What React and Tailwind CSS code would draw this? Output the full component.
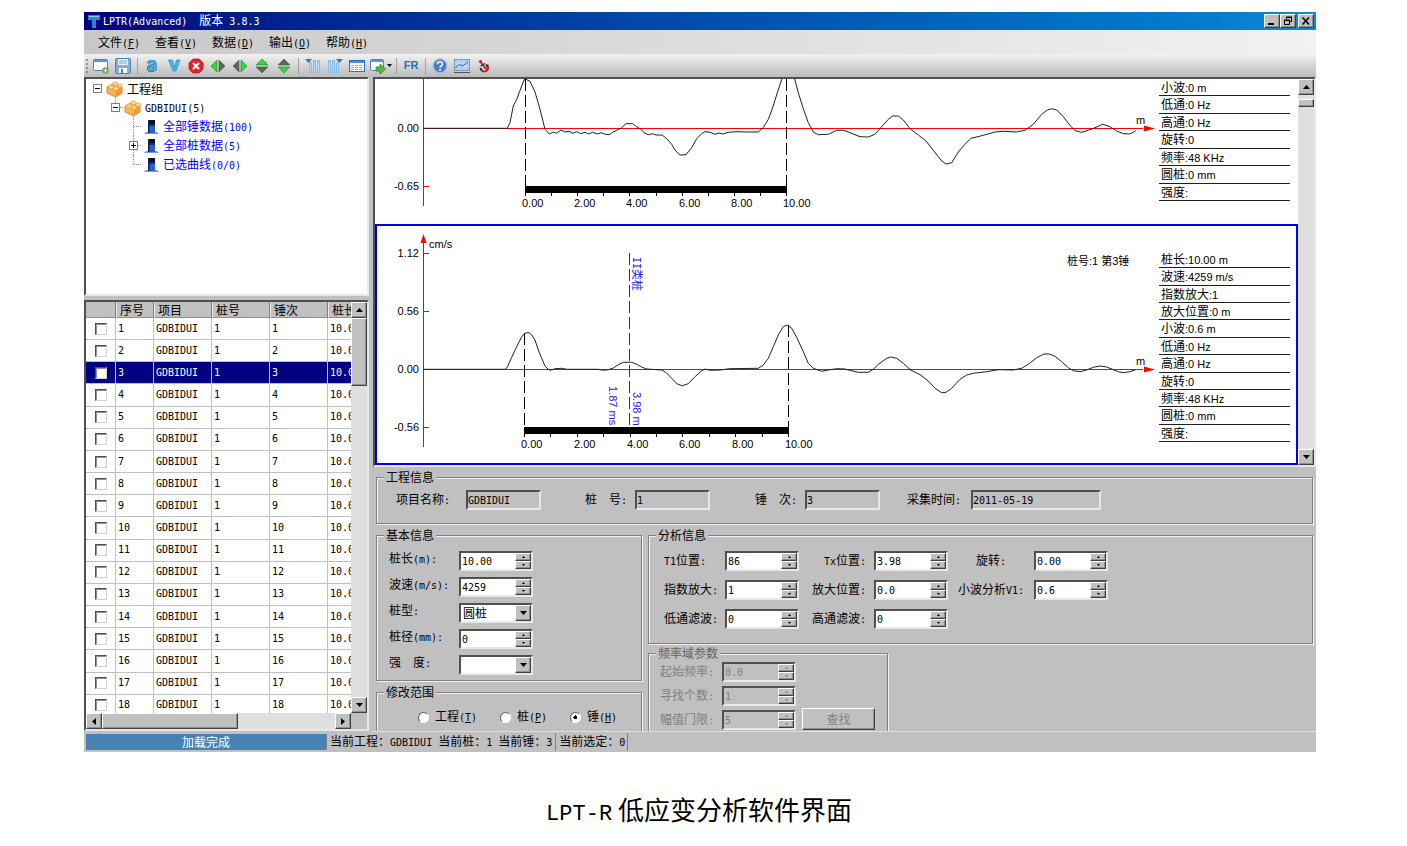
import { useId } from "react";

const raised =
  "border border-t-white border-l-white border-r-[#404040] border-b-[#404040] bg-[#c0c0c0] shadow-[inset_-1px_-1px_0_#909090]";
const sunken =
  "border-2 border-t-[#505050] border-l-[#505050] border-r-[#e8e8e8] border-b-[#e8e8e8]";

// Latin runs are set in a smaller face so that they take half the width of a Chinese character
function Mix({ text, sans }) {
  const parts = text.split(/([\x20-\x7e]+)/).filter(Boolean);
  return (
    <span className="whitespace-pre">
      {parts.map((part, i) =>
        /^[\x20-\x7e]/.test(part) ? (
          <span
            key={i}
            className={
              sans
                ? "font-['Liberation_Sans',sans-serif] text-[11px]"
                : "font-['DejaVu_Sans_Mono',monospace] text-[10px]"
            }
          >
            {part}
          </span>
        ) : (
          part
        )
      )}
    </span>
  );
}

function Arrow({ dir }) {
  const d = {
    up: "M0 4h7L3.5 0z",
    down: "M0 0h7L3.5 4z",
    left: "M4 0v7L0 3.5z",
    right: "M0 0v7L4 3.5z",
  };
  const flat = dir === "up" || dir === "down";
  return (
    <svg width={flat ? 7 : 4} height={flat ? 4 : 7} aria-hidden="true">
      <path d={d[dir]} />
    </svg>
  );
}

function ScrollButton({ dir }) {
  return (
    <button
      type="button"
      aria-label={`Scroll ${dir}`}
      className={`flex h-4 w-4 shrink-0 items-center justify-center ${raised}`}
    >
      <Arrow dir={dir} />
    </button>
  );
}

/* ---------- title, menu, toolbar ---------- */

function TitleBar() {
  return (
    <header className="flex h-[18px] items-center bg-linear-to-r from-[#000080] to-[#1088d6] pr-[2px] pl-1 text-white">
      <svg width="12" height="14" className="mr-[3px]" aria-hidden="true">
        <path d="M0 1h12v5H8v8H4V6H0z" fill="#2a86c4" />
        <path d="M1 2h10v1H1z" fill="#8fd0f0" />
      </svg>
      <h1 className="flex-1 text-[12px] leading-[16px]">
        <Mix text="LPTR(Advanced)  版本 3.8.3" />
      </h1>
      <button type="button" aria-label="Minimize" className={`flex h-[14px] w-[16px] items-center justify-center ${raised}`}>
        <svg width="10" height="10" aria-hidden="true">
          <path d="M1 7h6v2H1z" />
        </svg>
      </button>
      <button type="button" aria-label="Restore" className={`mr-[2px] flex h-[14px] w-[16px] items-center justify-center ${raised}`}>
        <svg width="10" height="10" fill="none" stroke="#000" aria-hidden="true">
          <path d="M3.5 3V1.5h5v4H7M3 1h6" />
          <path d="M1.5 4.5h5v4h-5zM1 4h6" />
        </svg>
      </button>
      <button type="button" aria-label="Close" className={`flex h-[14px] w-[16px] items-center justify-center ${raised}`}>
        <svg width="10" height="10" fill="none" stroke="#000" strokeWidth="1.6" aria-hidden="true">
          <path d="M1.5 1.5l6.5 7M8 1.5l-6.5 7" />
        </svg>
      </button>
    </header>
  );
}

const menus = [
  ["文件", "F"],
  ["查看", "V"],
  ["数据", "D"],
  ["输出", "O"],
  ["帮助", "H"],
];

function Hot({ text, letter }) {
  return (
    <span>
      {text}
      <span className="font-['DejaVu_Sans_Mono',monospace] text-[10px]">
        (<u>{letter}</u>)
      </span>
    </span>
  );
}

function MenuBar() {
  return (
    <nav className="flex h-6 items-center bg-linear-to-r from-[#c8c8c8] to-[#f2f2f2] pl-[14px] text-[12px]">
      {menus.map(([text, letter]) => (
        <button key={letter} type="button" className="w-[57px] text-left">
          <Hot text={text} letter={letter} />
        </button>
      ))}
    </nav>
  );
}

function Icon({ children }) {
  return (
    <svg width="16" height="16" viewBox="0 0 16 16" fill="none" aria-hidden="true">
      {children}
    </svg>
  );
}

function Tool({ label, children, className = "w-[22px]" }) {
  return (
    <button type="button" aria-label={label} className={`flex h-5 shrink-0 items-center justify-center ${className}`}>
      {children}
    </button>
  );
}

function Sep() {
  return <div className="mx-[3px] h-4 w-px shrink-0 bg-[#a0a0a0]" />;
}

function SideArrows({ left, right }) {
  return (
    <Icon>
      <path d="M1 8l6-6v12z" fill={left} stroke="#3a6a3a" strokeWidth=".6" />
      <path d="M15 8L9 2v12z" fill={right} stroke="#3a6a3a" strokeWidth=".6" />
    </Icon>
  );
}

function StackArrows({ top, bottom }) {
  return (
    <Icon>
      <path d="M8 1l6 6H2z" fill={top} stroke="#3a6a3a" strokeWidth=".6" />
      <path d="M8 15l6-6H2z" fill={bottom} stroke="#3a6a3a" strokeWidth=".6" />
    </Icon>
  );
}

const GREEN = "#2ee02e";
const GRAY = "#5c645c";

function Toolbar() {
  return (
    <div className="flex h-[23px] items-center bg-linear-to-b from-[#f2f2f2] to-[#bcbcbc] text-[12px]">
      <svg width="6" height="16" className="shrink-0" aria-hidden="true">
        <path d="M3 1v14" stroke="#909090" strokeWidth="2" strokeDasharray="2 2" />
      </svg>
      <Tool label="新建">
        <Icon>
          <rect x=".5" y="1.5" width="14" height="11" rx="1" fill="#fff" stroke="#4f7fb8" />
          <path d="M1 3h13" stroke="#5b9ae0" strokeWidth="2" />
          <circle cx="12.5" cy="12.5" r="3.2" fill="#5aa83c" />
          <path d="M12.5 10.5v4M10.5 12.5h4" stroke="#fff" strokeWidth="1.2" />
        </Icon>
      </Tool>
      <Tool label="保存">
        <Icon>
          <rect x=".5" y=".5" width="15" height="15" rx="1" fill="#7fb0e4" stroke="#4a80c0" />
          <path d="M3 1h10v6H3z" fill="#e8f2fc" />
          <path d="M4 3h8M4 5h8" stroke="#7ea6cc" />
          <path d="M4 10h8v5H4z" fill="#fff" />
          <path d="M6 11h2v4H6z" fill="#4a80c0" />
        </Icon>
      </Tool>
      <Sep />
      <Tool label="加速度">
        <Icon>
          <path d="M4.5 5.5C5 3 11 2.500 11 6v6.500M11 8C8 7.500 4.500 8 4.500 10.500c0 2.800 5 2.800 6.500-.5" stroke="#1b78b4" strokeWidth="3.2" />
          <path d="M4.5 5.5C5 3 11 2.500 11 6v6.500M11 8C8 7.500 4.500 8 4.500 10.500c0 2.800 5 2.800 6.500-.5" stroke="#58b8ea" strokeWidth="1.4" />
        </Icon>
      </Tool>
      <Tool label="速度">
        <Icon>
          <path d="M2.500 2h4L8.500 9l2-7h3.500L10 13H7z" fill="#4fb0e6" stroke="#3a94cc" strokeWidth=".8" />
        </Icon>
      </Tool>
      <Tool label="删除">
        <Icon>
          <path d="M5 1h6l4 4v6l-4 4H5l-4-4V5z" fill="#e8202a" stroke="#c01018" strokeWidth=".8" />
          <path d="M5 5l6 6M11 5l-6 6" stroke="#fff" strokeWidth="2.200" />
        </Icon>
      </Tool>
      <Tool label="左移">
        <SideArrows left={GREEN} right={GRAY} />
      </Tool>
      <Tool label="右移">
        <SideArrows left={GRAY} right={GREEN} />
      </Tool>
      <Tool label="上移">
        <StackArrows top={GREEN} bottom={GRAY} />
      </Tool>
      <Tool label="下移">
        <StackArrows top={GRAY} bottom={GREEN} />
      </Tool>
      <Sep />
      <Tool label="左列">
        <Icon>
          <path d="M5.500 4v11M9.500 2v13M13.500 2v13" stroke="#8cc0ec" strokeWidth="3" />
          <path d="M5.500 5v9M9.500 4v10M13.500 4v10" stroke="#b4d8f6" />
          <path d="M0 1h7L3.500 5z" fill="#3b78b4" />
        </Icon>
      </Tool>
      <Tool label="右列">
        <Icon>
          <path d="M2.500 2v13M6.500 2v13M10.500 4v11" stroke="#8cc0ec" strokeWidth="3" />
          <path d="M2.500 4v10M6.500 4v10M10.500 5v9" stroke="#b4d8f6" />
          <path d="M9 1h7l-3.500 4z" fill="#3b78b4" />
        </Icon>
      </Tool>
      <Tool label="表格">
        <Icon>
          <rect x=".5" y="2.500" width="15" height="11" fill="#fff" stroke="#2f6fc0" />
          <path d="M1 4h14" stroke="#4a90e0" strokeWidth="2" />
          <path d="M2 7.500h12M2 9.500h12M2 11.500h12" stroke="#8ab0d8" strokeDasharray="3 1" />
        </Icon>
      </Tool>
      <Tool label="导出" className="w-[25px] gap-px">
        <Icon>
          <rect x=".5" y="1.500" width="13" height="11" rx="1" fill="#fff" stroke="#4f7fb8" />
          <path d="M1 3h12" stroke="#5b9ae0" strokeWidth="2" />
          <path d="M6 9h4V6l5.500 5-5.500 5v-3H6z" fill="#5ab83c" stroke="#2f7a20" strokeWidth=".8" />
        </Icon>
        <svg width="5" height="3" aria-hidden="true">
          <path d="M0 0h5L2.500 3z" />
        </svg>
      </Tool>
      <Sep />
      <Tool label="FR">
        <span className="font-['Liberation_Sans',sans-serif] text-[11px] font-bold text-[#1874c4]">FR</span>
      </Tool>
      <Sep />
      <Tool label="帮助">
        <Icon>
          <circle cx="8" cy="8" r="7" fill="#4a7ccc" stroke="#a8c0e4" strokeWidth="1.500" />
          <path d="M5.500 6.200C5.500 3 10.500 3 10.500 6c0 1.800-2.500 1.800-2.500 3.800" stroke="#fff" strokeWidth="1.600" />
          <path d="M7.200 11h1.700v1.700H7.200z" fill="#fff" />
        </Icon>
      </Tool>
      <Tool label="曲线">
        <Icon>
          <rect x=".5" y="1.500" width="15" height="11" fill="#a8cdf0" stroke="#8a96a4" />
          <path d="M1 5h14M1 8h14M5 2v10M10 2v10" stroke="#d4e6f8" strokeWidth=".7" />
          <path d="M1.500 9.500l4-3 3 1.500 5.500-4" stroke="#2f6098" />
          <path d="M0 14.500h16" stroke="#505860" />
        </Icon>
      </Tool>
      <Tool label="锚点">
        <Icon>
          <path d="M5 4.500l5.500 7" stroke="#c01828" strokeWidth="1.800" />
          <circle cx="4.500" cy="3.500" r="1.500" fill="#c01828" />
          <path d="M4.500 8l4.500-2.500" stroke="#303030" strokeWidth="1.400" />
          <path d="M5 11.500c2 3 5 2.500 6.500.5 1-1.500 1-3-.5-4.500" stroke="#c01828" strokeWidth="1.800" />
          <path d="M3.500 9.500l3 1-2 2.500zM9.500 6l3.500 1-2.500 2.500z" fill="#303030" />
        </Icon>
      </Tool>
    </div>
  );
}

/* ---------- project tree ---------- */

function Branch({ box, up, down, line }) {
  return (
    <svg width="18" height="19" className="shrink-0" aria-hidden="true">
      <g stroke="#909090" strokeDasharray="1 1">
        {up && <path d="M9.500 0v9" />}
        {down && <path d="M9.500 10v9" />}
        {line && <path d="M10 9.500h8" />}
      </g>
      {box && <rect x="5.500" y="5.500" width="8" height="8" fill="#fff" stroke="#808080" />}
      {box && <path d={box === "plus" ? "M7 9.500h5M9.500 7v5" : "M7 9.500h5"} stroke="#000" />}
    </svg>
  );
}

function BrickIcon() {
  return (
    <svg width="18" height="18" viewBox="0 0 18 18" className="shrink-0" aria-hidden="true">
      <path d="M1 7l6-3 9 2.500v6.500l-6.500 4L1 13z" fill="#f8b458" stroke="#e08c28" />
      <path d="M9.500 10.500l6.500-4v6.500l-6.500 4z" fill="#f09a38" />
      <ellipse cx="5" cy="7" rx="2.600" ry="2" fill="#fdd898" stroke="#e89c40" strokeWidth=".8" />
      <ellipse cx="9.500" cy="3.800" rx="2.600" ry="2" fill="#fdd898" stroke="#e89c40" strokeWidth=".8" />
      <ellipse cx="10" cy="8.500" rx="2.600" ry="2" fill="#fdd898" stroke="#e89c40" strokeWidth=".8" />
      <ellipse cx="14" cy="5.800" rx="2.300" ry="1.800" fill="#fdd898" stroke="#e89c40" strokeWidth=".8" />
    </svg>
  );
}

function PileIcon() {
  return (
    <svg width="18" height="18" viewBox="0 0 18 18" className="shrink-0" aria-hidden="true">
      <path d="M4 14h11l2 2H2z" fill="#7f97e0" />
      <path d="M6 2h7v13H6z" fill="#2a62c8" />
      <path d="M6 2h7v4H6z" fill="#0a1020" />
      <path d="M6 6h7v2H6z" fill="#16306c" />
      <path d="M6 2h1.500v13H6z" fill="#10245c" />
    </svg>
  );
}

function Tree() {
  return (
    <div className={`h-[219px] bg-white text-[12px] leading-[19px] ${sunken}`}>
      <ul>
        <li>
          <div className="flex h-[19px] items-center pl-[2px]">
            <Branch box="minus" />
            <BrickIcon />
            <span className="pl-[3px]">工程组</span>
          </div>
          <ul>
            <li>
              <div className="flex h-[19px] items-center pl-5">
                <Branch box="minus" up line />
                <BrickIcon />
                <span className="pl-[3px]">
                  <Mix text="GDBIDUI(5)" />
                </span>
              </div>
              <ul className="text-[#0000ff]">
                <li className="flex h-[19px] items-center pl-[38px]">
                  <Branch up down line />
                  <PileIcon />
                  <span className="pl-[3px]">
                    <Mix text="全部锤数据(100)" />
                  </span>
                </li>
                <li className="flex h-[19px] items-center pl-[38px]">
                  <Branch box="plus" up down line />
                  <PileIcon />
                  <span className="pl-[3px]">
                    <Mix text="全部桩数据(5)" />
                  </span>
                </li>
                <li className="flex h-[19px] items-center pl-[38px]">
                  <Branch up line />
                  <PileIcon />
                  <span className="pl-[3px]">
                    <Mix text="已选曲线(0/0)" />
                  </span>
                </li>
              </ul>
            </li>
          </ul>
        </li>
      </ul>
    </div>
  );
}

/* ---------- record table ---------- */

const rows = Array.from({ length: 18 }, (_, i) => i + 1);
const headers = ["序号", "项目", "桩号", "锤次", "桩长"];

function RecordTable() {
  const cell = "overflow-hidden border-r border-b border-[#c0c0c0] p-0 pl-[2px]";
  return (
    <div className={`flex h-[431px] flex-col bg-[#c0c0c0] ${sunken}`}>
      <div className="flex min-h-0 flex-1">
        <div className="min-w-0 flex-1 overflow-hidden bg-white">
          <table className="h-[415px] w-[300px] table-fixed border-separate border-spacing-0">
            <colgroup>
              <col className="w-[30px]" />
              <col className="w-[38px]" />
              <col className="w-[58px]" />
              <col className="w-[58px]" />
              <col className="w-[58px]" />
              <col className="w-[58px]" />
            </colgroup>
            <thead className="bg-[#c0c0c0] text-[12px] leading-[15px]">
              <tr className="h-4">
                <th className="border-r border-b border-r-[#808080] border-b-[#909090] p-0" />
                {headers.map((h) => (
                  <th
                    key={h}
                    className="border-r border-b border-l border-r-[#808080] border-b-[#909090] border-l-[#e8e8e8] p-0 pl-[3px] text-left font-normal"
                  >
                    {h}
                  </th>
                ))}
              </tr>
            </thead>
            <tbody className="font-['DejaVu_Sans_Mono',monospace] text-[10px] leading-[14px]">
              {rows.map((n) => (
                <tr key={n} className={n === 3 ? "bg-[#000080] text-white" : ""}>
                  <td className="border-r border-b border-[#c0c0c0] p-0 pl-[9px]">
                    <input
                      type="checkbox"
                      aria-label={`选择 ${n}`}
                      className="block h-[12px] w-[12px] appearance-none border border-t-[#505050] border-r-[#d0d0d0] border-b-[#d0d0d0] border-l-[#505050] bg-white shadow-[inset_1px_1px_0_#909090]"
                    />
                  </td>
                  <td className={cell}>{n}</td>
                  <td className={cell}>GDBIDUI</td>
                  <td className={cell}>1</td>
                  <td className={cell}>{n}</td>
                  <td className={cell}>10.00</td>
                </tr>
              ))}
            </tbody>
          </table>
        </div>
        <div className="flex w-4 flex-col bg-[#dfdfdf]">
          <ScrollButton dir="up" />
          <div className={`h-[68px] ${raised}`} />
          <div className="flex-1" />
          <ScrollButton dir="down" />
        </div>
      </div>
      <div className="flex h-4 shrink-0 pr-4">
        <ScrollButton dir="left" />
        <div className={`w-[136px] ${raised}`} />
        <div className="flex-1 bg-[#dfdfdf]" />
        <ScrollButton dir="right" />
      </div>
    </div>
  );
}

/* ---------- curves ---------- */

// samples are x,y pairs on a grid of three units to the pixel
const curveA =
  "160,157 412,157 420,140 430,90 440,70 462,12 466,9 480,16 495,48 510,100 525,160 538,174 550,168 560,172 573,162 585,168 597,166 608,172 620,167 632,173 645,169 656,174 668,169 682,174 694,170 706,175 718,176 728,169 740,163 755,155 768,143 788,143 800,152 812,159 822,170 835,176 848,173 858,177 876,177 890,188 905,205 915,222 930,237 948,236 965,215 980,188 995,173 1005,167 1020,169 1035,175 1047,171 1058,174 1075,169 1100,167 1130,168 1165,168 1180,155 1195,130 1208,95 1222,50 1237,5 1255,-20 1273,5 1285,50 1300,98 1315,140 1330,168 1345,176 1375,175 1400,163 1420,163 1435,168 1470,182 1495,183 1515,175 1535,152 1555,130 1568,120 1585,120 1600,132 1620,158 1645,177 1668,195 1690,223 1715,255 1728,264 1745,260 1765,228 1785,205 1803,187 1840,178 1875,168 1900,166 1940,168 1965,163 1990,145 2015,115 2032,102 2045,98 2060,102 2080,122 2100,148 2115,164 2135,169 2155,163 2175,155 2198,145 2220,152 2240,165 2260,173 2278,174 2290,169 2297,164";
const curveB =
  "160,448 405,448 412,442 425,412 440,380 455,350 466,339 478,338 485,345 495,360 505,390 515,415 525,438 537,450 545,450 555,446 575,445 590,448 685,448 700,451 715,449 730,444 745,434 760,427 785,427 800,433 815,441 830,447 875,450 890,459 905,475 922,492 937,497 955,491 975,470 995,452 1005,447 1020,451 1050,450 1080,446 1165,445 1180,435 1195,415 1210,380 1225,345 1240,320 1252,315 1265,325 1280,352 1300,395 1315,430 1330,445 1355,454 1380,449 1400,446 1425,447 1435,450 1465,457 1495,457 1510,448 1525,433 1550,415 1562,411 1580,415 1600,430 1622,450 1650,464 1675,483 1695,505 1715,518 1728,517 1745,505 1770,478 1790,465 1810,460 1850,455 1885,449 1930,450 1955,445 1975,433 2000,413 2022,402 2038,402 2055,409 2075,425 2095,443 2110,452 2130,455 2150,450 2170,442 2190,438 2210,441 2230,449 2245,455 2260,458 2280,455 2297,449";

function toPoints(samples, dx, dy) {
  return samples
    .split(" ")
    .map((pair) => {
      const [x, y] = pair.split(",").map(Number);
      return `${(x / 3 - dx).toFixed(1)},${(y / 3 - dy).toFixed(1)}`;
    })
    .join(" ");
}

function Plot({ zero, top, bottom, ticks, points, pile, peaks, barY, children }) {
  const step = (pile[1] - pile[0]) / 10;
  return (
    <svg
      className="h-full min-w-0 flex-1 font-['Liberation_Sans','Noto_Sans_CJK_SC',sans-serif] text-[11px]"
      role="img"
      aria-label="测试曲线"
    >
      <path d={`M46.500 ${top}V${bottom}M46 ${zero}H766`} stroke="#f00" fill="none" />
      <path d={`M778 ${zero}l-11 -3v6z`} fill="#f00" />
      {ticks.map(([y, label]) => (
        <g key={label}>
          <path d={`M46 ${y}h6`} stroke="#f00" />
          <text x="42" y={y + 3} textAnchor="end">
            {label}
          </text>
        </g>
      ))}
      <text x="759" y={zero - 5}>
        m
      </text>
      <polyline points={points} fill="none" stroke="#202020" />
      {pile.map((x, i) => (
        <path key={x} d={`M${x} ${peaks[i]}V${barY}`} stroke="#000" strokeDasharray="12 4" />
      ))}
      <rect x={pile[0]} y={barY} width={pile[1] - pile[0]} height="7" />
      {Array.from({ length: 11 }, (_, i) => (
        <path key={i} d={`M${Math.floor(pile[0] + step * i) + 0.5} ${barY}v10`} stroke="#000" />
      ))}
      {[0, 2, 4, 6, 8, 10].map((n) => (
        <text key={n} x={Math.floor(pile[0] + step * n) - 3} y={barY + 21}>
          {n.toFixed(2)}
        </text>
      ))}
      {children}
    </svg>
  );
}

function Params({ items, className }) {
  return (
    <ul className={`mr-[6px] grid w-[131px] shrink-0 auto-rows-fr text-[12px] leading-[16px] ${className}`}>
      {items.map((t) => (
        <li key={t} className="overflow-hidden border-b border-[#202020] pl-[2px]">
          <Mix text={t} sans />
        </li>
      ))}
    </ul>
  );
}

function Charts() {
  return (
    <div className={`flex h-[390px] bg-white ${sunken}`}>
      <div className="min-w-0 flex-1">
        <div className="flex h-[145px] border-x-2 border-transparent">
          <Plot
            zero={49.5}
            top={0}
            bottom={127}
            ticks={[
              [49.5, "0.00"],
              [107.5, "-0.65"],
            ]}
            points={toPoints(curveA, 7, 3)}
            pile={[148.5, 409.5]}
            peaks={[0, 0]}
            barY={107}
          />
          <Params
            className="h-[122px]"
            items={["小波:0 m", "低通:0 Hz", "高通:0 Hz", "旋转:0", "频率:48 KHz", "圆桩:0 mm", "强度:"]}
          />
        </div>
        <div className="flex h-[241px] border-2 border-[#0000e8]">
          <Plot
            zero={143.5}
            top={10}
            bottom={221}
            ticks={[
              [27.5, "1.12"],
              [85.5, "0.56"],
              [143.5, "0.00"],
              [201.5, "-0.56"],
            ]}
            points={toPoints(curveB, 7, 6)}
            pile={[147.5, 411.5]}
            peaks={[107, 99]}
            barY={201}
          >
            <path d="M46.500 8l3 9h-6z" fill="#f00" />
            <text x="52" y="22">
              cm/s
            </text>
            <text x="690" y="39">
              桩号:1 第3锤
            </text>
            <path d="M252.500 27V201" stroke="#2020f0" strokeDasharray="12 4" />
            <g fill="#2020f0">
              <text transform="translate(256 31) rotate(90)">
                <tspan className="font-['DejaVu_Sans_Mono',monospace] text-[10px]">II</tspan>类桩
              </text>
              <text transform="translate(256 166) rotate(90)">3.98 m</text>
              <text transform="translate(232 160) rotate(90)">1.87 ms</text>
            </g>
          </Plot>
          <Params
            className="mt-[25px] h-[191px]"
            items={[
              "桩长:10.00 m",
              "波速:4259 m/s",
              "指数放大:1",
              "放大位置:0 m",
              "小波:0.6 m",
              "低通:0 Hz",
              "高通:0 Hz",
              "旋转:0",
              "频率:48 KHz",
              "圆桩:0 mm",
              "强度:",
            ]}
          />
        </div>
      </div>
      <div className="flex w-4 flex-col bg-[#dfdfdf]">
        <ScrollButton dir="up" />
        <div className="h-1" />
        <div className={`h-2 ${raised}`} />
        <div className="flex-1" />
        <ScrollButton dir="down" />
      </div>
    </div>
  );
}

/* ---------- forms ---------- */

function Group({ title, children, className = "", disabled }) {
  return (
    <fieldset
      disabled={disabled}
      className={`min-w-0 shrink-0 border border-[#808080] shadow-[inset_1px_1px_0_#f0f0f0,1px_1px_0_#f0f0f0] ${className}`}
    >
      <legend className={`ml-[7px] bg-[#c0c0c0] px-[2px] text-[12px] leading-[14px] ${disabled ? "text-[#606060]" : ""}`}>
        {title}
      </legend>
      {children}
    </fieldset>
  );
}

function Label({ id, text, className = "" }) {
  return (
    <label htmlFor={id} className={`text-[12px] leading-[14px] ${className}`}>
      <Mix text={text} />
    </label>
  );
}

function ReadField({ label, value, className, labelClass = "w-[50px]", inputClass = "w-[75px]" }) {
  const id = useId();
  return (
    <div className={`flex items-center ${className}`}>
      <Label id={id} text={label} className={labelClass} />
      <input
        id={id}
        readOnly
        defaultValue={value}
        className={`h-5 bg-[#c0c0c0] font-['DejaVu_Sans_Mono',monospace] text-[10px] ${sunken} ${inputClass}`}
      />
    </div>
  );
}

function Spin({ id, value, disabled }) {
  const step = `flex h-2 w-4 items-center justify-center ${raised}`;
  return (
    <div className={`flex h-5 w-[74px] ${sunken} ${disabled ? "bg-[#c0c0c0]" : "bg-white"}`}>
      <input
        id={id}
        defaultValue={value}
        className="min-w-0 flex-1 pl-px font-['DejaVu_Sans_Mono',monospace] text-[10px] disabled:text-[#808080]"
      />
      <div className="flex flex-col">
        <button type="button" aria-label="增加" className={step}>
          <svg width="3" height="2" fill={disabled ? "#808080" : "#000"} aria-hidden="true">
            <path d="M0 2h3L1.500 0z" />
          </svg>
        </button>
        <button type="button" aria-label="减少" className={step}>
          <svg width="3" height="2" fill={disabled ? "#808080" : "#000"} aria-hidden="true">
            <path d="M0 0h3L1.500 2z" />
          </svg>
        </button>
      </div>
    </div>
  );
}

function Select({ id, options }) {
  return (
    <div className={`relative h-5 w-[74px] bg-white ${sunken}`}>
      <select id={id} className="block h-4 w-full appearance-none pl-[2px] text-[12px] leading-[16px]">
        {options.map((o) => (
          <option key={o}>{o}</option>
        ))}
      </select>
      <span className={`pointer-events-none absolute top-0 right-0 flex h-4 w-4 items-center justify-center ${raised}`}>
        <Arrow dir="down" />
      </span>
    </div>
  );
}

function BasicField({ label, value, options }) {
  const id = useId();
  return (
    <div className="flex h-5 items-start">
      <Label id={id} text={label} className="w-[70px]" />
      {options ? <Select id={id} options={options} /> : <Spin id={id} value={value} />}
    </div>
  );
}

function SpinField({ label, value, labelClass, disabled }) {
  const id = useId();
  return (
    <div className="flex items-center">
      <Label id={id} text={label} className={labelClass} />
      <Spin id={id} value={value} disabled={disabled} />
    </div>
  );
}

function Radio({ text, letter, checked }) {
  return (
    <label className="flex items-center gap-[6px]">
      <input
        type="radio"
        name="scope"
        defaultChecked={checked}
        className="h-[11px] w-[11px] appearance-none rounded-full border border-t-[#606060] border-r-white border-b-white border-l-[#606060] bg-white checked:bg-[radial-gradient(circle,#000_2px,#fff_2px)]"
      />
      <Hot text={text} letter={letter} />
    </label>
  );
}

function Forms() {
  return (
    <div className="flex h-[265px] flex-col overflow-hidden border-b border-[#e0e0e0] pt-[3px] pr-[3px] pl-[3px]">
      <Group title="工程信息" className="h-[54px]">
        <div className="flex pt-[6px]">
          <ReadField label="项目名称:" value="GDBIDUI" className="ml-[19px]" labelClass="w-[70px]" />
          <ReadField label="桩  号:" value="1" className="ml-11" />
          <ReadField label="锤  次:" value="3" className="ml-[45px]" />
          <ReadField
            label="采集时间:"
            value="2011-05-19"
            className="ml-[27px]"
            labelClass="w-[64px]"
            inputClass="w-[130px]"
          />
        </div>
      </Group>
      <div className="mt-1 flex gap-[6px]">
        <div className="w-[266px] shrink-0">
          <Group title="基本信息" className="h-[153px]">
            <div className="flex flex-col gap-[6px] pt-[9px] pl-3">
              <BasicField label="桩长(m):" value="10.00" />
              <BasicField label="波速(m/s):" value="4259" />
              <BasicField label="桩型:" options={["圆桩", "方桩"]} />
              <BasicField label="桩径(mm):" value="0" />
              <BasicField label="强  度:" options={["", "C20", "C30"]} />
            </div>
          </Group>
          <Group title="修改范围" className="mt-1 h-16">
            <div className="flex justify-between pt-[9px] pr-6 pl-[41px] text-[12px] leading-[16px]">
              <Radio text="工程" letter="T" />
              <Radio text="桩" letter="P" />
              <Radio text="锤" letter="H" checked />
            </div>
          </Group>
        </div>
        <div className="min-w-0 flex-1">
          <Group title="分析信息" className="h-[116px]">
            <div className="flex pt-[9px] pl-[15px]">
              <div className="flex flex-col gap-[9px]">
                <SpinField label="T1位置:" value="86" labelClass="w-[61px]" />
                <SpinField label="指数放大:" value="1" labelClass="w-[61px]" />
                <SpinField label="低通滤波:" value="0" labelClass="w-[61px]" />
              </div>
              <div className="flex flex-col gap-[9px]">
                <SpinField label="Tx位置:" value="3.98" labelClass="w-[75px] pr-2 text-right" />
                <SpinField label="放大位置:" value="0.0" labelClass="w-[75px] pr-2 text-right" />
                <SpinField label="高通滤波:" value="0" labelClass="w-[75px] pr-2 text-right" />
              </div>
              <div className="flex flex-col gap-[9px]">
                <SpinField label="旋转:" value="0.00" labelClass="w-[86px] text-center" />
                <SpinField label="小波分析V1:" value="0.6" labelClass="w-[86px] text-center" />
              </div>
            </div>
          </Group>
          <Group title="频率域参数" disabled className="mt-[2px] h-[100px] w-[240px]">
            <div className="flex items-end gap-[6px] pt-[2px] pl-[11px] text-[#808080]">
              <div className="flex flex-col gap-1">
                <SpinField label="起始频率:" value="0.0" labelClass="w-[62px]" disabled />
                <SpinField label="寻找个数:" value="1" labelClass="w-[62px]" disabled />
                <SpinField label="幅值门限:" value="5" labelClass="w-[62px]" disabled />
              </div>
              <button type="button" disabled className={`h-[22px] w-[73px] text-[12px] leading-[18px] ${raised}`}>
                查找
              </button>
            </div>
          </Group>
        </div>
      </div>
    </div>
  );
}

function StatusBar() {
  return (
    <footer className="flex h-5 items-center gap-[3px] pl-[2px] text-[12px] leading-[16px]">
      <div className="h-4 w-[241px] border-r border-[#808080] bg-[#4682b4] text-center text-white">加载完成</div>
      <span className="border-r border-[#808080] pr-[3px]">
        <Mix text="当前工程：GDBIDUI 当前桩：1 当前锤：3" />
      </span>
      <span className="border-r border-[#808080] pr-[2px]">
        <Mix text="当前选定：0" />
      </span>
    </footer>
  );
}

export default function App() {
  return (
    <div className="min-h-screen bg-white pt-3 pr-[91px] pl-[84px] font-['Noto_Sans_CJK_SC',sans-serif] text-black">
      <main className="bg-[#c0c0c0]">
        <TitleBar />
        <MenuBar />
        <Toolbar />
        <div className="flex gap-1">
          <div className="flex w-[285px] shrink-0 flex-col gap-1">
            <Tree />
            <RecordTable />
          </div>
          <div className="min-w-0 flex-1">
            <Charts />
            <Forms />
          </div>
        </div>
        <StatusBar />
      </main>
      <p className="mt-[39px] pr-[2px] text-center text-[26px] leading-[36px]">
        <span className="font-['Liberation_Mono',monospace] text-[22px]">LPT-R</span> 低应变分析软件界面
      </p>
    </div>
  );
}
